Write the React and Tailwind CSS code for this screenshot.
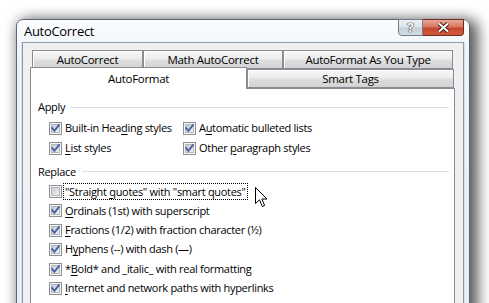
import React from "react";

function Cb({ checked = true }) {
  return (
    <svg width="13" height="13" viewBox="0 0 13 13" className="shrink-0">
      <defs>
        <linearGradient id="cbg" x1="0" y1="0" x2="1" y2="1">
          <stop offset="0" stopColor="#c2c6cc" />
          <stop offset="1" stopColor="#f3f3f4" />
        </linearGradient>
      </defs>
      <rect x="0.5" y="0.5" width="12" height="12" fill="#f6f6f6" stroke="#8e8f8f" />
      <rect x="2.5" y="2.5" width="8" height="8" fill="url(#cbg)" stroke="#b4b8be" />
      {checked && (
        <path d="M3.2 6.2 L5.4 8.8 L9.9 3.1" fill="none" stroke="#4a62a8" strokeWidth="1.9" strokeLinecap="square" />
      )}
    </svg>
  );
}

function Row({ checked = true, children, focus = false }) {
  return (
    <div className="flex items-center h-[19.4px] pl-[18px]">
      <Cb checked={checked} />
      {focus ? (
        <span className="ml-[1px] px-[1px] inline-block h-[17px] leading-[15px] border border-dotted border-black whitespace-pre">
          {children}
        </span>
      ) : (
        <span className="ml-[3px] whitespace-pre">{children}</span>
      )}
    </div>
  );
}

function Row2({ a, b }) {
  return (
    <div className="flex items-center h-[19.4px] pl-[18px]">
      <div className="flex items-center w-[134px]">
        <Cb />
        <span className="ml-[3px] whitespace-pre">{a}</span>
      </div>
      <div className="flex items-center">
        <Cb />
        <span className="ml-[3px] whitespace-pre">{b}</span>
      </div>
    </div>
  );
}

function U({ children }) {
  return <span className="underline underline-offset-[2px] decoration-1">{children}</span>;
}

const tabBack =
  "flex items-center justify-center border border-[#898c95] bg-[linear-gradient(#f7f7f7,#ececec_45%,#dedede_55%,#d3d3d3)] shadow-[inset_1px_1px_0_#ffffff]";

export default function App() {
  return (
    <div className="relative w-[489px] h-[303px] overflow-hidden bg-white font-['Open_Sans',sans-serif] text-[11px] tracking-[-0.3px] text-black">
      <div className="ml-[16px] mt-[19px] w-[454px] h-[310px] rounded-t-[7px] border border-[#5d6670] bg-[linear-gradient(#fbfcfe,#eef3f8_40px,#e6eef6)] shadow-[5px_3px_14px_3px_rgba(0,0,0,0.65)] flex flex-col">
        {/* title bar */}
        <div className="h-[25px] flex">
          <div className="pl-[7px] self-center text-[13px] tracking-[-0.3px] leading-none pt-[1px]">AutoCorrect</div>
          <div className="ml-auto mr-[5px] -mt-[1px] flex h-[17px]">
            <div className="w-[25px] h-[17px] rounded-bl-[4px] border border-[#707c8c] bg-[linear-gradient(#eef1f5,#dde3ea_45%,#c6ced8_55%,#d6dde6)] flex items-center justify-center text-[13px] font-bold text-white leading-none [text-shadow:0_0_1px_#333,0_0_1px_#333,0_0_1px_#333]">
              ?
            </div>
            <div className="w-[41px] h-[17px] rounded-br-[4px] border border-l-0 border-[#6e2c20] bg-[linear-gradient(#e9a99a,#d9755f_45%,#c7462e_55%,#d05a3e)] flex items-center justify-center">
              <svg width="13" height="11" viewBox="0 0 13 11">
                <path d="M2 1.5 L11 9.5 M11 1.5 L2 9.5" stroke="#4a2018" strokeWidth="4" />
                <path d="M2 1.5 L11 9.5 M11 1.5 L2 9.5" stroke="#ffffff" strokeWidth="2" />
              </svg>
            </div>
          </div>
        </div>
        {/* client */}
        <div className="mx-[5px] flex-1 border border-[#8a98a8] border-b-0 bg-[#f0f0f0] shadow-[-1px_0_0_#d2e4f4,1px_0_0_#d2e4f4] pt-[7px]">
          {/* tab row 1 */}
          <div className="flex ml-[9px] h-[19px] text-[11.5px]">
            <div className={tabBack + " w-[111px]"}>AutoCorrect</div>
            <div className={tabBack + " w-[140px]"}>Math AutoCorrect</div>
            <div className={tabBack + " w-[170px]"}>AutoFormat As You Type</div>
          </div>
          {/* tab row 2 */}
          <div className="flex items-end ml-[7px] h-[19px] text-[11.5px]">
            <div className="relative z-10 w-[217px] h-[22px] -mb-[1px] border border-b-0 border-[#898c95] bg-white flex items-start justify-center pt-[2px]">
              AutoFormat
            </div>
            <div className={tabBack + " w-[207px] h-[19px]"}>Smart Tags</div>
          </div>
          {/* panel */}
          <div className="ml-[7px] w-[425px] h-[240px] border border-[#898c95] bg-white pt-[10px] pr-[5px]">
            <div className="flex items-center h-[16px] pl-[7px]">
              <span>Apply</span>
              <div className="ml-[6px] flex-1 h-px bg-[#d5dfe5]" />
            </div>
            <div className="mt-[4px]">
              <Row2
                a={<>Built-in Hea<U>d</U>ing styles</>}
                b={<>A<U>u</U>tomatic bulleted lists</>}
              />
              <Row2
                a={<><U>L</U>ist styles</>}
                b={<>Other <U>p</U>aragraph styles</>}
              />
            </div>
            <div className="mt-[6px] flex items-center h-[16px] pl-[7px]">
              <span>Replace</span>
              <div className="ml-[6px] flex-1 h-px bg-[#d5dfe5]" />
            </div>
            <div className="mt-[2px]">
              <Row checked={false} focus>
                <>"Straight <U>q</U>uotes" with "smart quotes"</>
              </Row>
              <Row><U>O</U>rdinals (1st) with superscript</Row>
              <Row><U>F</U>ractions (1/2) with fraction character (½)</Row>
              <Row>H<U>y</U>phens (--) with dash (—)</Row>
              <Row>*<U>B</U>old* and _italic_ with real formatting</Row>
              <Row><U>I</U>nternet and network paths with hyperlinks</Row>
            </div>
          </div>
        </div>
      </div>
      {/* cursor */}
      <svg className="absolute left-[255px] top-[187px]" width="13" height="21" viewBox="0 0 13 21">
        <path d="M0.5 0.5 L0.5 16.5 L4.5 12.8 L7.3 19.5 L9.6 18.5 L6.9 12 L12 12 Z" fill="#ffffff" stroke="#000000" strokeWidth="1" strokeLinejoin="miter" />
      </svg>
    </div>
  );
}
